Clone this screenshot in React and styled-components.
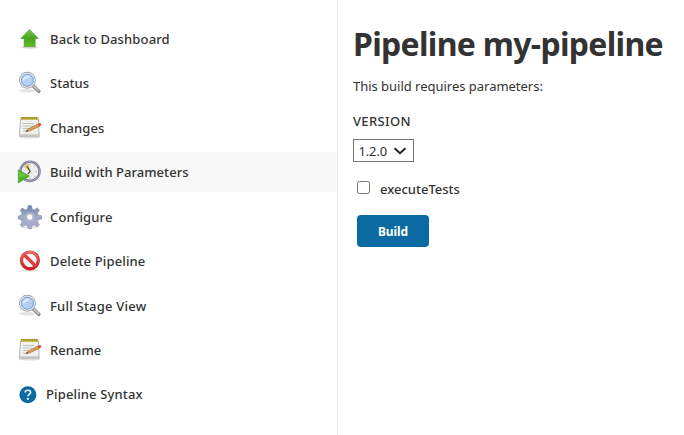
import React from "react";
import styled, { createGlobalStyle } from "styled-components";

const GlobalStyle = createGlobalStyle`
  * { box-sizing: border-box; }
  body {
    margin: 0;
    background: #fff;
    color: #333;
    font-family: "Noto Sans", "Open Sans", sans-serif;
    font-size: 14px;
    overflow: hidden;
  }
`;

const Page = styled.div`
  display: grid;
  grid-template-columns: 338px 1fr;
  height: 435px;
`;

const SidePanel = styled.nav`
  display: flex;
  flex-direction: column;
  gap: 4.44px;
  padding-top: 18.95px;
  border-right: 1px solid #eee;
`;

const Task = styled.a`
  display: flex;
  align-items: center;
  flex: none;
  gap: ${(p) => (p.$compact ? "9px" : "8px")};
  height: 40px;
  padding-left: 18px;
  background: ${(p) => (p.$active ? "#f8f8f8" : "transparent")};
  color: #333;
  white-space: nowrap;
`;

const TaskIcon = styled.svg`
  flex: none;
  width: ${(p) => p.$size || 24}px;
  height: ${(p) => p.$size || 24}px;
  overflow: visible;
`;

const TaskLabel = styled.span`
  font-size: 13px;
  font-weight: 500;
  line-height: 20px;
  letter-spacing: ${(p) => p.$tracking || 0}px;
`;

const MainPanel = styled.main`
  display: flex;
  flex-direction: column;
  align-items: flex-start;
  padding: 20px 0 0 15px;
  white-space: nowrap;
`;

const Title = styled.h1`
  margin: 0;
  font-size: 32px;
  font-weight: 700;
  line-height: 48px;
  letter-spacing: -0.7px;
`;

const Intro = styled.p`
  margin: 8px 0 0;
  font-size: 13px;
  line-height: 20px;
  letter-spacing: -0.02px;
`;

const ParameterName = styled.label`
  margin-top: 15px;
  font-size: 13px;
  font-weight: 500;
  line-height: 20px;
  letter-spacing: 0.35px;
`;

const Choice = styled.button`
  display: flex;
  align-items: center;
  justify-content: space-between;
  width: 61px;
  height: 23px;
  margin-top: 8px;
  padding: 0 6px 0 4.5px;
  border: 1px solid #767676;
  border-radius: 0;
  background: #fff;
  color: #333;
  font: 13px "Noto Sans", sans-serif;
  letter-spacing: -0.15px;
`;

const CheckRow = styled.label`
  display: flex;
  align-items: center;
  gap: 10px;
  height: 20px;
  margin: 17px 0 0 4px;
  font-size: 13px;
  font-weight: 500;
`;

const CheckBox = styled.input`
  appearance: none;
  width: 13px;
  height: 13px;
  margin: -4px 0 0;
  border: 1px solid #767676;
  border-radius: 2.5px;
  background: #fff;
`;

const BuildButton = styled.button`
  width: 72px;
  height: 32px;
  margin: 16px 0 0 4px;
  padding: 0;
  border: 0;
  border-radius: 4px;
  background: #0b6aa2;
  color: #fff;
  font: 700 12px "Noto Sans", sans-serif;
  letter-spacing: -0.1px;
`;

function UpIcon() {
  return (
    <TaskIcon viewBox="0 0 24 24">
      <defs>
        <linearGradient id="upFill" x1="0" y1="0" x2="0" y2="1">
          <stop offset="0" stopColor="#7cc94a" />
          <stop offset=".5" stopColor="#4ba322" />
          <stop offset="1" stopColor="#5cc01c" />
        </linearGradient>
      </defs>
      <ellipse cx="11.5" cy="20.3" rx="8.5" ry="1.4" fill="#777" opacity=".3" />
      <path d="M11.5 2.6 20.3 11.6h-3.2v8H6.2v-8H2.8z" fill="url(#upFill)" stroke="#459a20" strokeWidth=".7" strokeLinejoin="round" />
    </TaskIcon>
  );
}

function SearchIcon() {
  return (
    <TaskIcon viewBox="0 0 24 24">
      <ellipse cx="9" cy="19.8" rx="8" ry="1.8" fill="#777" opacity=".2" />
      <path d="m14.6 14.2 6.2 6" stroke="#858585" strokeWidth="3.6" strokeLinecap="round" />
      <path d="m15 14.3 5.6 5.4" stroke="#c9c9c9" strokeWidth="1.6" strokeLinecap="round" />
      <circle cx="9.4" cy="9.2" r="7.6" fill="#b4d0f2" stroke="#a0a3a8" strokeWidth="1.7" />
      <circle cx="9.4" cy="9.2" r="7" fill="none" stroke="#eceef0" strokeWidth="1.1" />
      <circle cx="9.4" cy="9.2" r="6" fill="none" stroke="#6d91c6" strokeWidth=".8" />
      <path d="M5 10.3C4.3 6.3 8 3.8 12 5.3c1 1-4 1.7-7 5" fill="#dceafb" />
    </TaskIcon>
  );
}

function NotepadIcon() {
  return (
    <TaskIcon viewBox="0 0 24 24">
      <ellipse cx="12" cy="21.4" rx="10" ry="1.3" fill="#777" opacity=".2" />
      <path d="M2.6 3h17.8l.8 17.6H1.4z" fill="#f0f0ee" stroke="#a4a5a1" strokeWidth=".8" strokeLinejoin="round" />
      <path d="M1.6 18.2h19.4l.1 2.3H1.5z" fill="#c7c8c4" />
      <path d="M2.8 1h17.4v2.8H2.8z" fill="#c8b440" />
      <path d="M3.3 1.8h16.6" stroke="#857722" strokeWidth="1.4" strokeDasharray="1 1.1" />
      <path d="M5 7.5h11M5 10h9M5 12.5h6M5 15h4" stroke="#bbbcba" strokeWidth=".9" />
      <path d="m7.8 15.8 2.4-2.8L19.8 8l1.4 2.4-9.7 4.6z" fill="#dda04c" stroke="#976528" strokeWidth=".6" />
      <path d="m19.8 8 2-.9 1.5.8-.2 1.4-1.9 1.1z" fill="#e2432f" />
      <path d="m7.8 15.8 1.5-1.8.8 1.1z" fill="#333" />
    </TaskIcon>
  );
}

function ClockIcon() {
  return (
    <TaskIcon viewBox="0 0 24 24">
      <circle cx="12" cy="11.4" r="9.6" fill="#eeeeea" stroke="#7c7c98" strokeWidth="2.4" />
      <circle cx="12" cy="11.4" r="9.8" fill="none" stroke="#a5a5c0" strokeWidth=".9" />
      <path d="M12 11.4 5.8 6l4.8-2.4z" fill="#dfc056" />
      <path d="M12 4v1.3M19 11.4h-1.3M12 18.8v-1.3M17 6.2l-.8.8M17 17l-.8-.8" stroke="#aaa" strokeWidth=".9" />
      <path d="m9 6.5 3.3 5-2.5 2.6" fill="none" stroke="#404040" strokeWidth="1.1" />
      <path d="M.3 9.9 11.4 16 .3 23z" fill="#4cb521" stroke="#3c9420" strokeWidth=".6" />
      <path d="m1 11.2 8.6 4.8L1 17.2z" fill="#78cf46" opacity=".65" />
    </TaskIcon>
  );
}

function GearIcon() {
  return (
    <TaskIcon viewBox="0 0 24 24">
      <defs>
        <linearGradient id="gearFill" x1="0" y1="0" x2="0" y2="1">
          <stop offset="0" stopColor="#7084aa" />
          <stop offset=".48" stopColor="#9eabc9" />
          <stop offset="1" stopColor="#b0abd0" />
        </linearGradient>
      </defs>
      <ellipse cx="12" cy="22.4" rx="8" ry="1.2" fill="#777" opacity=".2" />
      <path
        d="M10.2.5h3.2l.8 3.6 2 .8 3.1-2 2.1 2.1-2 3.1.8 2 3.5.8v3l-3.5.8-.8 2 2 3.1-2.1 2.1-3.1-2-2 .8-.8 3h-3.2l-.8-3-2-.8-3.1 2L2.2 20l2-3.1-.8-2-3.2-.8v-3l3.2-.8.8-2-2-3.1L4.3 3l3.1 2 2-.8z"
        fill="url(#gearFill)" stroke="#868aa8" strokeWidth=".6" strokeLinejoin="round"
      />
      <circle cx="11.8" cy="12" r="4.8" fill="#b9c3df" opacity=".65" />
      <circle cx="11.8" cy="12" r="3.3" fill="#fff" stroke="#8b90ad" strokeWidth=".7" />
    </TaskIcon>
  );
}

function StopIcon() {
  return (
    <TaskIcon viewBox="0 0 24 24">
      <defs>
        <linearGradient id="stopFill" x1="0" y1="0" x2="0" y2="1">
          <stop offset="0" stopColor="#ec6b69" />
          <stop offset="1" stopColor="#cf1d1d" />
        </linearGradient>
      </defs>
      <ellipse cx="12" cy="21.2" rx="9" ry="1.4" fill="#777" opacity=".25" />
      <circle cx="11.9" cy="11.4" r="8.4" fill="#f4f4f4" stroke="#c42b2b" strokeWidth="3.2" />
      <path d="m6.2 5.8 11.4 11.2" stroke="#cf2d2d" strokeWidth="3.2" />
      <circle cx="11.9" cy="11.4" r="8.4" fill="none" stroke="url(#stopFill)" strokeWidth="2.3" />
      <path d="m6.2 5.8 11.4 11.2" stroke="#e04444" strokeWidth="2.1" />
    </TaskIcon>
  );
}

function HelpIcon() {
  return (
    <TaskIcon $size={19} viewBox="0 0 19 19">
      <circle cx="9.9" cy="9.7" r="8.5" fill="#0b6aa2" />
      <path d="M7.2 7.5c.1-3 5.4-3 5.4 0 0 2-2.7 1.8-2.7 3.8" fill="none" stroke="#fff" strokeWidth="1.6" />
      <circle cx="9.9" cy="13.8" r="1.1" fill="#fff" />
    </TaskIcon>
  );
}

const tasks = [
  { label: "Back to Dashboard", Icon: UpIcon, tracking: 0.14 },
  { label: "Status", Icon: SearchIcon },
  { label: "Changes", Icon: NotepadIcon, tracking: 0.08 },
  { label: "Build with Parameters", Icon: ClockIcon, active: true, tracking: 0.04 },
  { label: "Configure", Icon: GearIcon, tracking: 0.12 },
  { label: "Delete Pipeline", Icon: StopIcon, tracking: 0.14 },
  { label: "Full Stage View", Icon: SearchIcon, tracking: 0.22 },
  { label: "Rename", Icon: NotepadIcon, tracking: 0.05 },
  { label: "Pipeline Syntax", Icon: HelpIcon, compact: true, tracking: 0.14 },
];

export default function App() {
  return (
    <Page>
      <GlobalStyle />
      <SidePanel>
        {tasks.map(({ label, Icon, active, compact, tracking }) => (
          <Task key={label} $active={active} $compact={compact}>
            <Icon />
            <TaskLabel $tracking={tracking}>{label}</TaskLabel>
          </Task>
        ))}
      </SidePanel>
      <MainPanel>
        <Title>Pipeline my-pipeline</Title>
        <Intro>This build requires parameters:</Intro>
        <ParameterName>VERSION</ParameterName>
        <Choice>
          1.2.0
          <svg width="14" height="8" viewBox="0 0 14 8">
            <path d="m1.5 1.2 5.5 5 5.5-5" fill="none" stroke="#222" strokeWidth="2" />
          </svg>
        </Choice>
        <CheckRow>
          <CheckBox type="checkbox" />
          executeTests
        </CheckRow>
        <BuildButton>Build</BuildButton>
      </MainPanel>
    </Page>
  );
}
